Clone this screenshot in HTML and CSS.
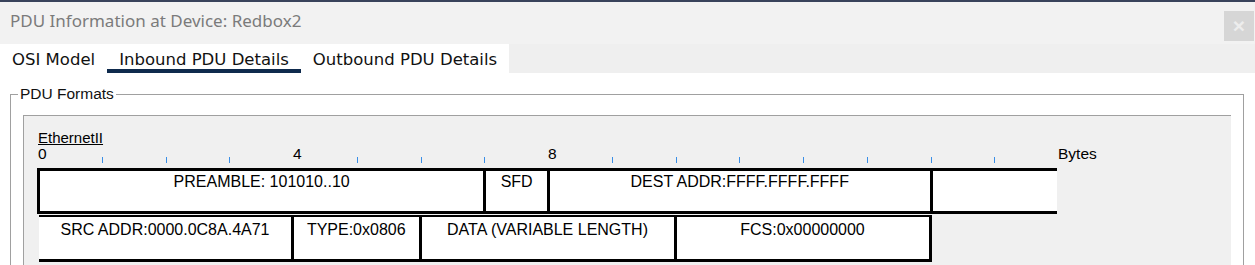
FILE: index.html
```html
<!DOCTYPE html>
<html lang="en">
<head>
    <meta charset="utf-8">
    <title>PDU Information at Device: Redbox2</title>
    <link rel="stylesheet" href="styles.css">
</head>
<body>
    <div class="window">
        <div class="titlebar">
            <span class="title">PDU Information at Device: Redbox2</span>
            <button class="close">&times;</button>
        </div>
        <div class="tabs">
            <span class="tab">OSI Model</span>
            <span class="tab active">Inbound PDU Details</span>
            <span class="tab">Outbound PDU Details</span>
        </div>
        <div class="content">
            <fieldset class="formats">
                <legend>PDU Formats</legend>
                <div class="panel">
                    <div class="proto">EthernetII</div>
                    <div class="ruler">
                        <span class="num">0</span>
                        <span class="tick"></span>
                        <span class="tick"></span>
                        <span class="tick"></span>
                        <span class="num">4</span>
                        <span class="tick"></span>
                        <span class="tick"></span>
                        <span class="tick"></span>
                        <span class="num">8</span>
                        <span class="tick"></span>
                        <span class="tick"></span>
                        <span class="tick"></span>
                        <span class="tick"></span>
                        <span class="tick"></span>
                        <span class="tick"></span>
                        <span class="tick"></span>
                        <span class="unit">Bytes</span>
                    </div>
                    <div class="row row-top">
                        <div class="cell w7">PREAMBLE: 101010..10</div>
                        <div class="cell w1">SFD</div>
                        <div class="cell w6">DEST ADDR:FFFF.FFFF.FFFF</div>
                        <div class="cell w2"></div>
                    </div>
                    <div class="row row-bottom">
                        <div class="cell w4">SRC ADDR:0000.0C8A.4A71</div>
                        <div class="cell w2">TYPE:0x0806</div>
                        <div class="cell w4">DATA (VARIABLE LENGTH)</div>
                        <div class="cell w4">FCS:0x00000000</div>
                    </div>
                </div>
            </fieldset>
        </div>
    </div>
</body>
</html>
```

FILE: styles.css
```css
body {
    margin: 0;
    background-color: #fff;
    overflow: hidden;
    font-family: "Liberation Sans", Arial, sans-serif;
    color: #000;
}
.window {
    height: 263px;
    overflow: hidden;
    border-top: 2px solid #39435b;
    --b: 63.75px;
}
.titlebar {
    display: flex;
    height: 42px;
    padding-left: 10px;
    background-color: #f2f2f2;
}
.title {
    font-family: "Noto Sans", sans-serif;
    font-size: 17px;
    line-height: 38px;
    color: #7b7b7b;
}
.close {
    width: 30px;
    height: 30px;
    margin: 9px 1px 0 auto;
    padding: 0;
    border: none;
    background-color: #d6d6d6;
    color: #ededed;
    font-family: "Liberation Sans", Arial, sans-serif;
    font-size: 21px;
    font-weight: bold;
    line-height: 30px;
}
.tabs {
    display: flex;
    height: 29px;
    background-color: #efefef;
}
.tab {
    padding: 3px 12px 0;
    background-color: #fff;
    font-family: "DejaVu Sans", Verdana, sans-serif;
    font-size: 16.5px;
    line-height: 26px;
    color: #111;
}
.tab.active {
    box-shadow: inset 0 -4px 0 #0e2a4d;
}
.content {
    padding: 12px 11px 0 10px;
}
.formats {
    margin: 0;
    min-width: 0;
    padding: 0 7px 20px;
    border: 1px solid #a0a0a0;
}
.formats legend {
    padding: 0 2px;
    font-size: 15.5px;
    line-height: 18px;
    color: #111;
}
.panel {
    height: 200px;
    margin: 12px 5px 0;
    padding: 14px 0 0 14px;
    background-color: #f0f0f0;
    border-top: 1px solid #a0a0a0;
    border-left: 1px solid #a0a0a0;
}
.proto {
    font-size: 15px;
    line-height: 16px;
    text-decoration: underline;
}
.ruler {
    display: flex;
    height: 17px;
    margin-bottom: 5px;
    font-size: 15.5px;
    line-height: 16px;
}
.num, .tick {
    flex: none;
    width: var(--b);
}
.tick {
    display: flex;
    align-items: flex-end;
}
.tick::before {
    content: "";
    width: 1px;
    height: 6px;
    background-color: #3a8ee6;
}
.row {
    display: flex;
    font-size: 16px;
    line-height: 18px;
    text-align: center;
}
.cell {
    flex: none;
    box-sizing: border-box;
    background-color: #fff;
}
.row-top {
    height: 46px;
    margin-left: -1px;
}
.row-top .cell {
    padding-top: 2px;
    border-top: 3px solid #000;
    border-bottom: 3px solid #000;
    border-left: 3px solid #000;
}
.row-bottom {
    height: 47px;
    margin: 1px 0 0 1px;
}
.row-bottom .cell {
    padding-top: 4px;
    border-top: 2px solid #000;
    border-bottom: 3px solid #000;
    border-right: 3px solid #000;
}
.w1 { width: var(--b); }
.w2 { width: calc(var(--b) * 2); }
.w4 { width: calc(var(--b) * 4); }
.w6 { width: calc(var(--b) * 6); }
.w7 { width: calc(var(--b) * 7); }
```
